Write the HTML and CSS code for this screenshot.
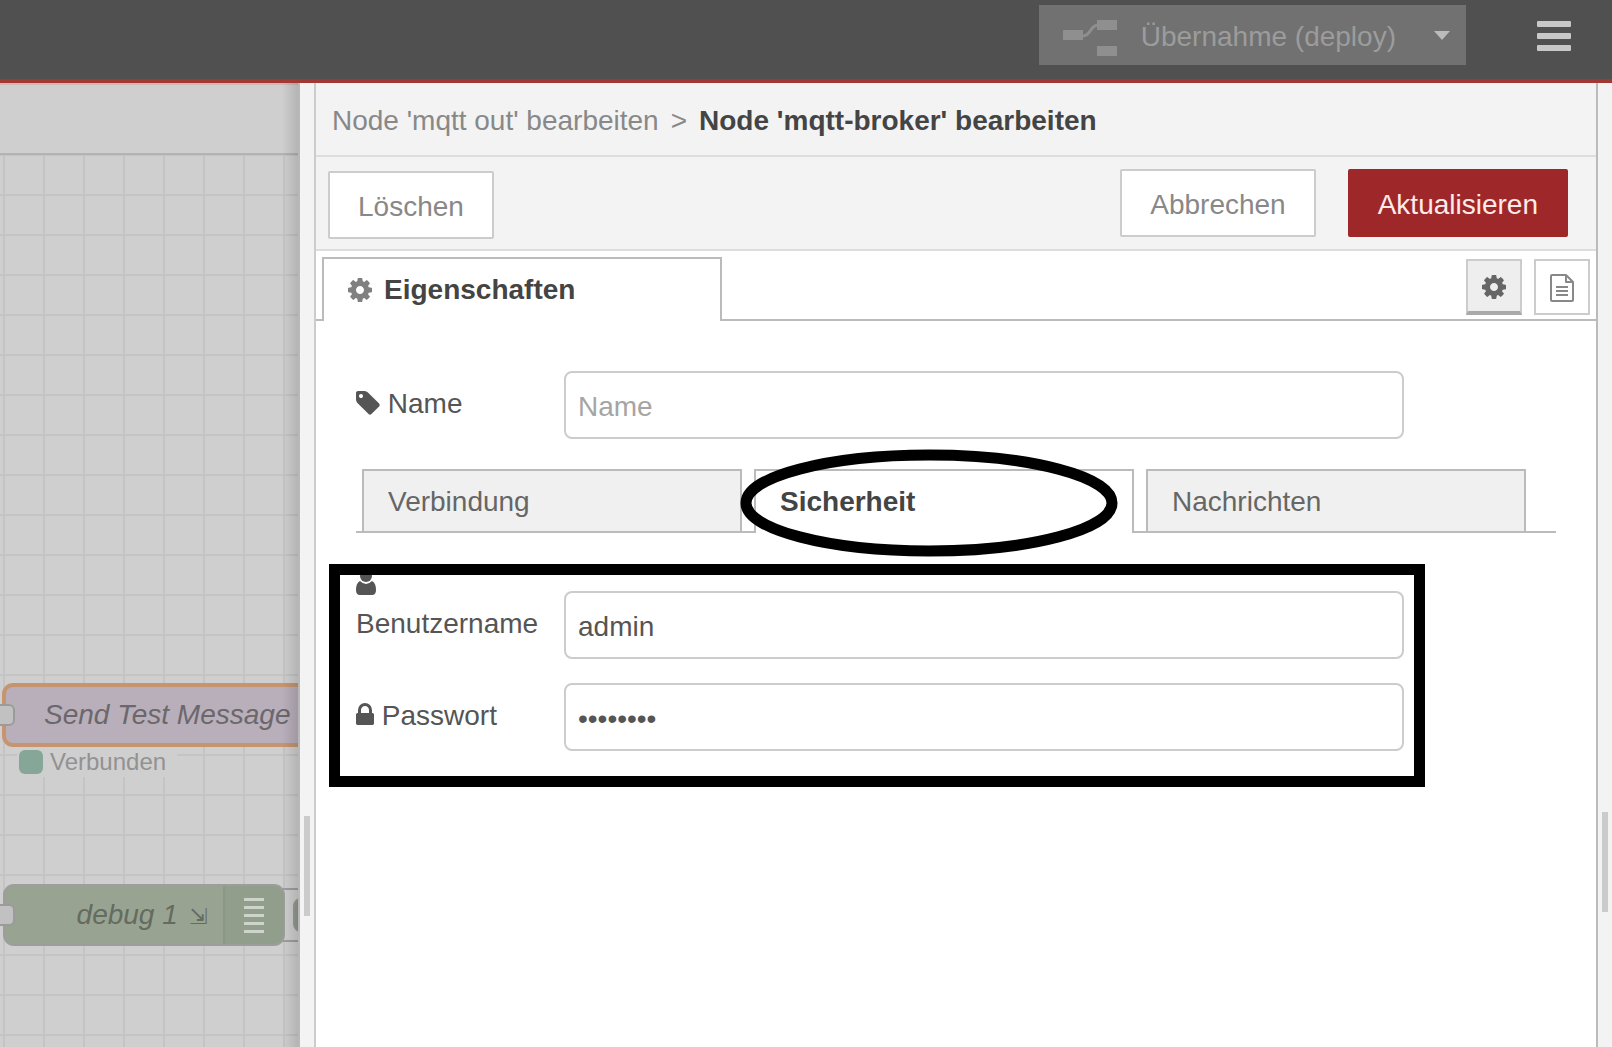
FILE: index.html
```html
<!DOCTYPE html>
<html lang="de">
<head>
<meta charset="utf-8">
<meta name="viewport" content="width=device-width, initial-scale=1">
<title>Node-RED</title>
<link rel="stylesheet" href="styles.css">
</head>
<body>
<svg class="defs" aria-hidden="true">
  <symbol id="cog" viewBox="128 128 1536 1536"><path d="M1152 896q0-106-75-181t-181-75-181 75-75 181 75 181 181 75 181-75 75-181zm512-109v222q0 12-8 23t-20 13l-185 28q-19 54-39 91 35 50 107 138 10 12 10 25t-9 23q-27 37-99 108t-94 71q-12 0-26-9l-138-108q-44 23-91 38-16 136-29 186-7 28-36 28h-222q-14 0-24.500-8.500t-11.500-21.500l-28-184q-49-16-90-37l-141 107q-10 9-25 9-14 0-25-11-126-114-165-168-7-10-7-23 0-12 8-23 15-21 51-66.500t54-70.500q-27-50-41-99l-183-27q-13-2-21-12.500t-8-23.500v-222q0-12 8-23t19-13l186-28q14-46 39-92-40-57-107-138-10-12-10-24 0-10 9-23 26-36 98.500-107.500t94.500-71.500q13 0 26 10l138 107q44-23 91-38 16-136 29-186 7-28 36-28h222q14 0 24.500 8.500t11.500 21.500l28 184q49 16 90 37l142-107q9-9 24-9 13 0 25 10 129 119 165 170 7 8 7 22 0 12-8 23-15 21-51 66.500t-54 70.500q26 50 41 98l183 28q13 2 21 12.500t8 23.500z"/></symbol>
</svg>

<header class="header">
  <button class="deploy" type="button" disabled>
    <svg class="deploy-icon" viewBox="0 0 54 36" aria-hidden="true"><path d="M20 16c8 0 7-11 15-11" fill="none" stroke="currentColor" stroke-width="3"/><path d="M0 10h20v10H0zM34 0h20v10H34zM34 26h20v10H34z" fill="currentColor"/></svg>
    <span class="deploy-label">Übernahme (deploy)</span>
    <svg class="deploy-caret" viewBox="0 0 16 9" aria-hidden="true"><path d="M0 0h16L8 9z" fill="currentColor"/></svg>
  </button>
  <button class="menu" type="button" aria-label="Menü">
    <svg viewBox="0 0 34 30" aria-hidden="true"><path d="M1 0h32a1 1 0 0 1 1 1v4a1 1 0 0 1-1 1H1a1 1 0 0 1-1-1V1a1 1 0 0 1 1-1zM1 12h32a1 1 0 0 1 1 1v4a1 1 0 0 1-1 1H1a1 1 0 0 1-1-1v-4a1 1 0 0 1 1-1zM1 24h32a1 1 0 0 1 1 1v4a1 1 0 0 1-1 1H1a1 1 0 0 1-1-1v-4a1 1 0 0 1 1-1z" fill="currentColor"/></svg>
  </button>
</header>

<div class="main">
  <section class="workspace">
    <div class="workspace-tabs"></div>
    <div class="canvas">
      <div class="node node-mqtt">Send Test Message</div>
      <div class="port port-mqtt"></div>
      <div class="status"><span class="status-dot"></span>Verbunden</div>
      <div class="toggle"><span class="toggle-fill"></span></div>
      <div class="node node-debug">
        <span class="node-label">debug 1 <span class="node-mark">⇲</span></span>
        <span class="node-bars"><i></i><i></i><i></i><i></i><i></i></span>
      </div>
      <div class="port port-debug"></div>
    </div>
    <div class="shade"></div>
  </section>
  <div class="resizer"><span></span></div>

  <main class="tray">
    <h1 class="crumbs"><span class="crumb-parent">Node 'mqtt out' bearbeiten</span><span class="crumb-sep">&gt;</span>Node 'mqtt-broker' bearbeiten</h1>
    <div class="toolbar">
      <button class="btn btn-delete" type="button">Löschen</button>
      <button class="btn" type="button">Abbrechen</button>
      <button class="btn btn-primary" type="button">Aktualisieren</button>
    </div>
    <div class="tray-tabs">
      <button class="tab tab-active tab-main" type="button"><svg class="icon" aria-hidden="true"><use href="#cog"/></svg>Eigenschaften</button>
      <div class="tray-actions">
        <button class="square square-on" type="button" aria-label="Eigenschaften"><svg class="icon" aria-hidden="true"><use href="#cog"/></svg></button>
        <button class="square" type="button" aria-label="Beschreibung"><svg class="icon-doc" viewBox="0 0 24 28" stroke="currentColor" stroke-width="2" stroke-linejoin="round" aria-hidden="true"><path d="M2 1h14l7 7v18a1 1 0 0 1-1 1H2a1 1 0 0 1-1-1V2a1 1 0 0 1 1-1zM16 1v7h7M6 13h12M6 17h12M6 21h12"/></svg></button>
      </div>
    </div>

    <form class="form">
      <div class="row">
        <label for="name"><svg class="icon-tag" viewBox="128 128 1536 1536" aria-hidden="true"><path d="M576 448q0-53-37.500-90.500t-90.500-37.500-90.500 37.500-37.500 90.500 37.500 90.500 90.500 37.500 90.500-37.500 37.500-90.500zm1067 576q0 53-37 90l-491 492q-39 37-91 37-53 0-90-37l-715-716q-38-37-64.500-101t-26.500-117v-416q0-52 38-90t90-38h416q53 0 117 26.500t102 64.500l715 714q37 39 37 91z"/></svg> Name</label>
        <input id="name" type="text" placeholder="Name">
      </div>
      <div class="form-tabs">
        <button class="tab" type="button">Verbindung</button>
        <button class="tab tab-active" type="button">Sicherheit<svg class="mark-ellipse" viewBox="0 0 378 108" aria-hidden="true"><ellipse cx="189" cy="54" rx="183" ry="48" fill="none" stroke="#000" stroke-width="11"/></svg></button>
        <button class="tab" type="button">Nachrichten</button>
      </div>
      <div class="credentials">
        <div class="row">
          <label for="user"><svg class="icon-user" viewBox="0 0 20 26" aria-hidden="true"><circle cx="10" cy="7" r="6"/><path d="M4 12Q7 15 10 15T16 12Q20 14 20 21Q20 26 16 26H4Q0 26 0 21Q0 14 4 12z"/></svg> Benutzername</label>
          <input id="user" type="text" value="admin">
        </div>
        <div class="row">
          <label for="pass"><svg class="icon-lock" viewBox="320 128 1152 1408" aria-hidden="true"><path d="M640 768h512v-192q0-106-75-181t-181-75-181 75-75 181v192zm832 96v576q0 40-28 68t-68 28h-960q-40 0-68-28t-28-68v-576q0-40 28-68t68-28h32v-192q0-184 132-316t316-132 316 132 132 316v192h32q40 0 68 28t28 68z"/></svg> Passwort</label>
          <input id="pass" type="password" value="password">
        </div>
        <div class="mark-box"></div>
      </div>
    </form>
  </main>
  <div class="resizer resizer-right"><span></span></div>
</div>
</body>
</html>
```
FILE: styles.css
```css
* { box-sizing: border-box; }

body {
  margin: 0;
  min-height: 100vh;
  display: flex;
  flex-direction: column;
  background: #f3f3f3;
  color: #555;
  font: 28px/40px "Liberation Sans", Arial, sans-serif;
}

button, input { font: inherit; color: inherit; }
button { display: flex; align-items: center; border: 0; padding: 0; background: none; }
svg { fill: currentColor; flex: none; }
.defs { position: absolute; width: 0; height: 0; }

/* Header */
.header {
  display: flex;
  justify-content: flex-end;
  align-items: flex-start;
  gap: 71px;
  height: 83px;
  padding: 5px 41px 0 0;
  background: #505050;
  border-bottom: 4px solid #a03834;
}
.deploy {
  height: 60px;
  padding: 0 16px 0 24px;
  gap: 24px;
  background: #717171;
  color: #9c9c9c;
}
.deploy-label { padding-top: 3px; }
.deploy-icon { width: 54px; height: 36px; color: #8f8f8f; margin-top: 6px; }
.deploy-caret { width: 16px; height: 9px; margin-left: 14px; color: #bbb; }
.menu { height: 62px; color: #c8c8c8; }
.menu svg { width: 34px; height: 30px; }

.main { flex: 1; display: flex; }

/* Workspace, dimmed while the tray is open */
.workspace {
  position: relative;
  flex: 0 0 300px;
  display: flex;
  flex-direction: column;
  overflow: hidden;
  background: #cfcfcf;
  border-right: 2px solid #b8b8b8;
}
.workspace-tabs { height: 72px; border-top: 2px solid #d3b6b5; border-bottom: 2px solid #b3b3b3; }
.canvas {
  position: relative;
  flex: 1;
  background-image:
    linear-gradient(90deg, #c4c4c4 2px, transparent 2px),
    linear-gradient(#c4c4c4 2px, transparent 2px);
  background-size: 40px 40px;
  background-position: 3px 39px;
}
.shade {
  position: absolute;
  inset: 0 0 0 auto;
  width: 16px;
  background: linear-gradient(90deg, rgba(0, 0, 0, 0), rgba(0, 0, 0, .13));
}
.node {
  position: absolute;
  display: flex;
  align-items: center;
  border-radius: 11px;
  font-style: italic;
  white-space: nowrap;
  color: #6b676b;
}
.node-mqtt {
  left: 2px;
  top: 528px;
  width: 320px;
  height: 64px;
  padding-left: 38px;
  background: #b9afbb;
  border: 4px solid #c69570;
}
.node-debug {
  left: 3px;
  top: 729px;
  width: 282px;
  height: 62px;
  justify-content: flex-end;
  background: #98a491;
  border: 2px solid #9c9e9b;
  color: #646b60;
}
.node-label { padding-right: 15px; }
.node-mark { margin-left: 4px; font: italic 22px "DejaVu Sans", sans-serif; }
.node-bars {
  display: flex;
  flex-direction: column;
  justify-content: center;
  align-items: center;
  gap: 5px;
  align-self: stretch;
  width: 60px;
  border-left: 2px solid #8c9788;
  border-radius: 0 9px 9px 0;
  background: #929e8c;
}
.node-bars i { width: 20px; height: 3px; background: #ced3cb; }
.port {
  position: absolute;
  left: -6px;
  width: 21px;
  height: 22px;
  background: #c1c1c1;
  border: 2px solid #9b9b9b;
  border-radius: 6px;
}
.port-mqtt { top: 549px; }
.port-debug { top: 749px; }
.status {
  position: absolute;
  left: 17px;
  top: 592px;
  display: flex;
  align-items: center;
  gap: 7px;
  width: 160px;
  height: 30px;
  padding-left: 2px;
  background: #cfcfcf;
  color: #929292;
  font-size: 24px;
}
.status-dot { width: 24px; height: 24px; border-radius: 6px; background: #86a797; }
.toggle {
  position: absolute;
  left: 270px;
  top: 733px;
  width: 60px;
  height: 54px;
  padding: 8px 0 8px 21px;
  background: #cfcfcf;
  border: 2px solid #9e9e9e;
}
.toggle-fill { display: block; height: 100%; background: #909b8b; border: 2px solid #999; border-radius: 8px 0 0 8px; }

/* Drag handles */
.resizer { flex: 0 0 14px; display: flex; justify-content: center; }
.resizer span { width: 6px; height: 100px; margin-top: 733px; background: #cbcbcb; }
.resizer-right span { margin-top: 729px; }

/* Tray */
.tray {
  flex: 1;
  min-width: 0;
  background: #fff;
  border: solid #bbb;
  border-width: 0 2px;
  border-left-color: #ccc;
}
.crumbs {
  margin: 0;
  padding: 18px 16px 14px;
  height: 74px;
  font-size: 28px;
  background: #f3f3f3;
  border-bottom: 2px solid #ddd;
  color: #444;
}
.crumb-parent, .crumb-sep { font-weight: normal; color: #888; }
.crumb-sep { margin: 0 12px; }
.toolbar {
  display: flex;
  gap: 32px;
  padding: 12px 28px 12px 12px;
  background: #f3f3f3;
  border-bottom: 2px solid #ddd;
}
.btn {
  height: 68px;
  padding: 3px 28px 0;
  background: #fff;
  border: 2px solid #ccc;
  border-radius: 2px;
  color: #888;
}
.btn-delete { margin: 2px auto -2px 0; }
.btn-primary { background: #9e2729; border-color: #9e2729; color: #ffeaea; }

.tray-tabs {
  display: flex;
  justify-content: space-between;
  align-items: flex-start;
  height: 70px;
  padding: 6px 6px 0;
  border-bottom: 2px solid #bbb;
}
.tab {
  position: relative;
  flex: 1;
  height: 62px;
  padding: 2px 24px 0;
  background: #f0f0f0;
  border: 2px solid #bbb;
  border-bottom: 0;
  color: #666;
}
.tab-active { height: 64px; padding-bottom: 2px; background: #fff; color: #444; font-weight: bold; }
.tab-main { max-width: 400px; gap: 12px; }
.icon { width: 24px; height: 24px; color: #808080; }
.tray-actions { display: flex; gap: 12px; padding-top: 2px; }
.square {
  width: 56px;
  height: 56px;
  padding-top: 2px;
  justify-content: center;
  background: #fff;
  border: 2px solid #ccc;
  color: #888;
}
.square-on { background: #eee; border-bottom: 4px solid #aaa; }
.square-on .icon { color: #666; }
.icon-doc { width: 24px; height: 28px; fill: none; }

/* Form */
.form { padding: 50px 40px 40px; }
.row { display: flex; align-items: flex-end; }
.row label { flex: 0 0 208px; padding-bottom: 15px; }
.row input {
  width: 70%;
  height: 68px;
  padding: 3px 12px 0;
  background: #fff;
  border: 2px solid #ccc;
  border-radius: 8px;
  outline: 0;
}
.row input::placeholder { color: #a5a5a5; opacity: 1; }
.icon-tag { width: 24px; height: 24px; vertical-align: -2px; }
.icon-user { width: 20px; height: 26px; vertical-align: -2px; }
.icon-lock { width: 18px; height: 22px; vertical-align: 0; }

.form-tabs {
  display: flex;
  align-items: flex-start;
  gap: 12px;
  height: 64px;
  margin-top: 30px;
  padding: 0 30px 0 6px;
  border-bottom: 2px solid #bbb;
}

.credentials { position: relative; margin-top: 31px; }
.credentials .row + .row { margin-top: 24px; }

/* Highlight marks drawn over the form */
.mark-ellipse { position: absolute; left: -16px; top: -22px; width: 378px; height: 108px; z-index: 1; }
.mark-box {
  position: absolute;
  inset: 0 131px -36px -27px;
  border: 11px solid #000;
  pointer-events: none;
}
```
